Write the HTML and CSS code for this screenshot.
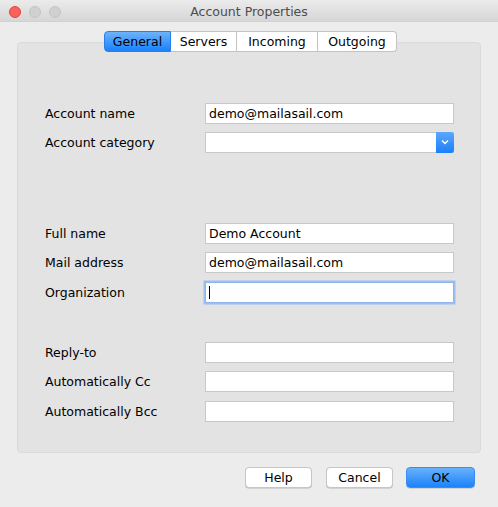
FILE: index.html
```html
<!DOCTYPE html>
<html>
<head>
<meta charset="utf-8">
<link rel="stylesheet" href="styles.css">
</head>
<body>
<div class="window">
  <div class="titlebar">
    <div class="lights">
      <span class="light red"></span>
      <span class="light gray"></span>
      <span class="light gray"></span>
    </div>
    <div class="title">Account Properties</div>
  </div>
  <div class="body">
    <div class="tabs">
      <div class="tab active t1">General</div>
      <div class="tab t2">Servers</div>
      <div class="tab t3">Incoming</div>
      <div class="tab t4">Outgoing</div>
    </div>
    <div class="panel">
      <div class="group g1">
        <div class="row"><span class="label">Account name</span><div class="field">demo@mailasail.com</div></div>
        <div class="row"><span class="label">Account category</span><div class="field select"><span class="sel-btn"><svg width="8" height="6" viewBox="0 0 8 6"><path d="M1 1.5 L4 4.5 L7 1.5" fill="none" stroke="#fff" stroke-width="1.4"/></svg></span></div></div>
      </div>
      <div class="group g2">
        <div class="row"><span class="label">Full name</span><div class="field">Demo Account</div></div>
        <div class="row"><span class="label">Mail address</span><div class="field">demo@mailasail.com</div></div>
        <div class="row"><span class="label">Organization</span><div class="field focus"><span class="caret"></span></div></div>
      </div>
      <div class="group g3">
        <div class="row"><span class="label">Reply-to</span><div class="field"></div></div>
        <div class="row"><span class="label">Automatically Cc</span><div class="field"></div></div>
        <div class="row"><span class="label">Automatically Bcc</span><div class="field"></div></div>
      </div>
    </div>
    <div class="buttons">
      <div class="btn">Help</div>
      <div class="btn cancel">Cancel</div>
      <div class="btn primary">OK</div>
    </div>
  </div>
</div>
</body>
</html>
```
FILE: styles.css
```css
html, body {
  margin: 0;
  padding: 0;
}
body {
  width: 498px;
  height: 507px;
  background: #ececec;
  font-family: "DejaVu Sans", "Liberation Sans", sans-serif;
  font-size: 12px;
  color: #000;
  overflow: hidden;
}
.window {
  width: 498px;
  height: 507px;
  background: #ececec;
}
.titlebar {
  height: 21px;
  border-bottom: 1px solid #d1d1d1;
  background: linear-gradient(#ebebeb, #d6d6d6);
  display: flex;
  align-items: center;
  justify-content: center;
  position: relative;
}
.lights {
  position: absolute;
  left: 9px;
  top: 6px;
  display: flex;
  gap: 8px;
}
.light {
  width: 10px;
  height: 10px;
  border-radius: 50%;
  display: block;
}
.light.red {
  background: #fc605c;
  border: 1px solid #e0443e;
}
.light.gray {
  background: #d0d0d0;
  border: 1px solid #c4c4c4;
}
.title {
  color: #4d4d4d;
  font-size: 12.5px;
  padding-top: 1px;
}
.body {
  padding-top: 9px;
}
.tabs {
  display: flex;
  position: relative;
  z-index: 1;
  margin-bottom: -10px;
  padding-left: 104px;
}
.tab {
  height: 19px;
  line-height: 19px;
  background: #fff;
  border: 1px solid #c3c3c3;
  border-left: none;
  text-align: center;
  font-size: 12.5px;
}
.t1 { width: 65px; }
.t2 { width: 65px; }
.t3 { width: 80px; }
.t4 { width: 78px; }
.tab:first-child {
  border-left: 1px solid #c3c3c3;
  border-radius: 4px 0 0 4px;
}
.tab:last-child {
  border-radius: 0 4px 4px 0;
}
.tab.active {
  background: linear-gradient(#6cb3fa, #1a82fb);
  border-color: #2a7fe8;
  color: #000;
}
.panel {
  margin-left: 17px;
  width: 462px;
  height: 409px;
  background: #e3e3e3;
  border: 1px solid #dadada;
  border-radius: 4px;
  box-sizing: content-box;
  padding: 0;
}
.group {
  display: flex;
  flex-direction: column;
  gap: 8.5px;
  padding-left: 27px;
}
.g1 { margin-top: 60px; gap: 7.5px; }
.g2 { margin-top: 70px; }
.g3 { margin-top: 39px; }
.row {
  display: flex;
  align-items: center;
  height: 21px;
}
.label {
  width: 160px;
  flex: none;
  font-size: 12.5px;
}
.field {
  width: 244px;
  height: 19px;
  background: #fff;
  border: 1px solid #c8c8c8;
  line-height: 19px;
  padding-left: 3px;
  box-sizing: content-box;
  font-size: 12.5px;
  position: relative;
}
.select .sel-btn {
  position: absolute;
  right: -1px;
  top: -1px;
  width: 18px;
  height: 21px;
  border-radius: 0 3px 3px 0;
  background: linear-gradient(#5ba8fb, #1c7ffa);
  display: flex;
  align-items: center;
  justify-content: center;
}
.focus {
  border-color: #8fb3ea;
  box-shadow: 0 0 0 1.5px #9cc0f2;
}
.caret {
  display: block;
  width: 1px;
  height: 13px;
  background: #000;
  margin-top: 3px;
}
.buttons {
  display: flex;
  justify-content: flex-end;
  padding-right: 23px;
  margin-top: 14px;
}
.btn {
  width: 65px;
  height: 19px;
  line-height: 19px;
  text-align: center;
  background: #fff;
  border: 1px solid #c6c6c6;
  border-radius: 4px;
  font-size: 12.5px;
  box-shadow: 0 0.5px 0 #b8b8b8;
}
.btn.cancel {
  margin-left: 14px;
}
.btn.primary {
  width: 67px;
  margin-left: 13px;
  background: linear-gradient(#69b1fb, #1b83fb);
  border-color: #3a8cf0;
}
```
